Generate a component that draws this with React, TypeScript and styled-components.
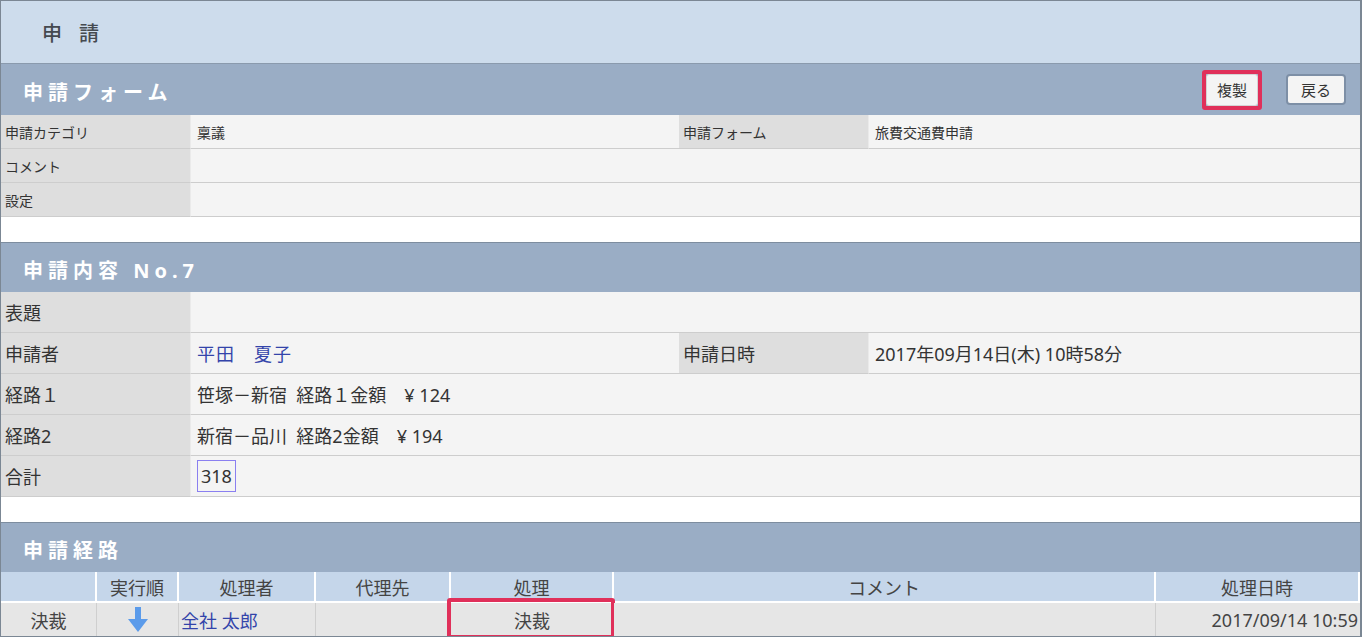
import React from 'react';
import styled, { createGlobalStyle } from 'styled-components';

const GlobalStyle = createGlobalStyle`
  html, body {
    margin: 0;
    padding: 0;
    background: #ffffff;
  }
  body {
    font-family: "Noto Sans", "Noto Sans CJK JP", sans-serif;
    color: #333333;
  }
`;

const Frame = styled.main`
  width: 1362px;
  height: 637px;
  box-sizing: border-box;
  border: 1px solid #7b8794;
  border-right-width: 2px;
  overflow: hidden;
  display: flex;
  flex-direction: column;
`;

const TitleBar = styled.header`
  height: 62px;
  flex: none;
  background: #cddcec;
  border-bottom: 1px solid #8a9aad;
  display: flex;
  align-items: center;
  padding-left: 41px;
`;

const Title = styled.h1`
  margin: 0;
  font-size: 20px;
  font-weight: 500;
  letter-spacing: 17px;
  color: #454a50;
`;

const SectionHeader = styled.div<{ $h: number; $top?: boolean }>`
  height: ${({ $h }) => $h}px;
  flex: none;
  background: #9aadc5;
  border-top: ${({ $top }) => ($top ? '1px solid #7d8d9f' : 'none')};
  display: flex;
  align-items: center;
  justify-content: space-between;
  padding: 0 14px 0 22px;
`;

const SectionTitle = styled.h2`
  margin: 0;
  padding-top: 4px;
  font-size: 20px;
  font-weight: 700;
  letter-spacing: 5px;
  color: #ffffff;
`;

const Buttons = styled.div`
  display: flex;
  align-items: center;
  gap: 24px;
`;

const Highlight = styled.div`
  border: 4px solid #e0305a;
  border-radius: 3px;
  display: flex;
`;

const Button = styled.button`
  height: 32px;
  padding: 0 10px;
  font-family: "Noto Sans CJK JP", sans-serif;
  font-size: 15px;
  color: #333;
  background: #f4f4f4;
  border: 1px solid #d4d4d4;
  border-radius: 3px;
  cursor: pointer;
`;

const OutlinedButton = styled(Button)`
  border: 2px solid #7d8fa6;
  border-radius: 4px;
  height: 31px;
  width: 60px;
`;

const Grid = styled.div<{ $row: number; $size: number }>`
  display: grid;
  grid-template-columns: 190px 488px 190px 1fr;
  grid-auto-rows: ${({ $row }) => $row}px;
  font-size: ${({ $size }) => $size}px;
  flex: none;
`;

const Label = styled.div`
  background: #dedede;
  border-bottom: 1px solid #cdcdcd;
  border-right: 1px solid #eaeaea;
  display: flex;
  align-items: center;
  padding-left: 4px;
  color: #333;
`;

const Value = styled.div<{ $span?: boolean; $link?: boolean }>`
  grid-column: ${({ $span }) => ($span ? 'span 3' : 'auto')};
  background: #f4f4f4;
  border-bottom: 1px solid #cdcdcd;
  display: flex;
  align-items: center;
  padding-left: 6px;
  white-space: pre;
  color: ${({ $link }) => ($link ? '#3344aa' : '#333')};
  letter-spacing: ${({ $link }) => ($link ? '1px' : '0')};
`;

const Boxed = styled.span`
  border: 1px solid #8a7ff0;
  padding: 2px 3px;
  line-height: 26px;
`;

const Gap = styled.div`
  height: 25px;
  flex: none;
  background: #ffffff;
`;

const RouteTable = styled.div`
  display: grid;
  grid-template-columns: 96px 82px 137px 135px 163px 542px 1fr;
  grid-template-rows: 31px 33px;
  font-size: 18px;
  flex: none;
`;

const HeadCell = styled.div`
  background: #c5d6ea;
  border-right: 2px solid #ffffff;
  border-bottom: 2px solid #ffffff;
  display: flex;
  align-items: center;
  justify-content: center;
  color: #444;
  &:last-child {
    border-right: none;
  }
`;

const Cell = styled.div<{ $align?: 'left' | 'center' | 'right'; $link?: boolean }>`
  position: relative;
  background: #e6e6e6;
  border-right: 1px solid #cfcfcf;
  display: flex;
  align-items: center;
  justify-content: ${({ $align }) =>
    $align === 'left' ? 'flex-start' : $align === 'right' ? 'flex-end' : 'center'};
  padding: 0 2px;
  color: ${({ $link }) => ($link ? '#3344aa' : '#444')};
  &:last-child {
    border-right: none;
  }
`;

const CellMark = styled.div`
  position: absolute;
  left: -4px;
  right: -2px;
  top: -5px;
  bottom: -3px;
  border: 4px solid #e0305a;
  border-radius: 3px;
  pointer-events: none;
`;

const ArrowDown = () => (
  <svg width="20" height="26" viewBox="0 0 20 26">
    <rect x="7" y="0" width="6" height="14" fill="#5b9bea" />
    <polygon points="0,12 20,12 10,25" fill="#5b9bea" />
  </svg>
);

const App: React.FC = () => {
  return (
    <Frame>
      <GlobalStyle />
      <TitleBar>
        <Title>申請</Title>
      </TitleBar>

      <SectionHeader $h={51}>
        <SectionTitle>申請フォーム</SectionTitle>
        <Buttons>
          <Highlight>
            <Button>複製</Button>
          </Highlight>
          <OutlinedButton>戻る</OutlinedButton>
        </Buttons>
      </SectionHeader>
      <Grid $row={34} $size={14}>
        <Label>申請カテゴリ</Label>
        <Value>稟議</Value>
        <Label>申請フォーム</Label>
        <Value>旅費交通費申請</Value>
        <Label>コメント</Label>
        <Value $span />
        <Label>設定</Label>
        <Value $span />
      </Grid>
      <Gap />

      <SectionHeader $h={49} $top>
        <SectionTitle>申請内容 No.7</SectionTitle>
      </SectionHeader>
      <Grid $row={41} $size={18}>
        <Label>表題</Label>
        <Value $span />
        <Label>申請者</Label>
        <Value $link>平田　夏子</Value>
        <Label>申請日時</Label>
        <Value>2017年09月14日(木) 10時58分</Value>
        <Label>経路１</Label>
        <Value $span>笹塚－新宿  経路１金額　¥ 124</Value>
        <Label>経路2</Label>
        <Value $span>新宿－品川  経路2金額　¥ 194</Value>
        <Label>合計</Label>
        <Value $span>
          <Boxed>318</Boxed>
        </Value>
      </Grid>
      <Gap />

      <SectionHeader $h={49} $top>
        <SectionTitle>申請経路</SectionTitle>
      </SectionHeader>
      <RouteTable>
        <HeadCell />
        <HeadCell>実行順</HeadCell>
        <HeadCell>処理者</HeadCell>
        <HeadCell>代理先</HeadCell>
        <HeadCell>処理</HeadCell>
        <HeadCell>コメント</HeadCell>
        <HeadCell>処理日時</HeadCell>

        <Cell>決裁</Cell>
        <Cell>
          <ArrowDown />
        </Cell>
        <Cell $align="left" $link>
          全社 太郎
        </Cell>
        <Cell />
        <Cell>
          決裁
          <CellMark />
        </Cell>
        <Cell />
        <Cell $align="right">2017/09/14 10:59</Cell>
      </RouteTable>
    </Frame>
  );
};

export default App;
